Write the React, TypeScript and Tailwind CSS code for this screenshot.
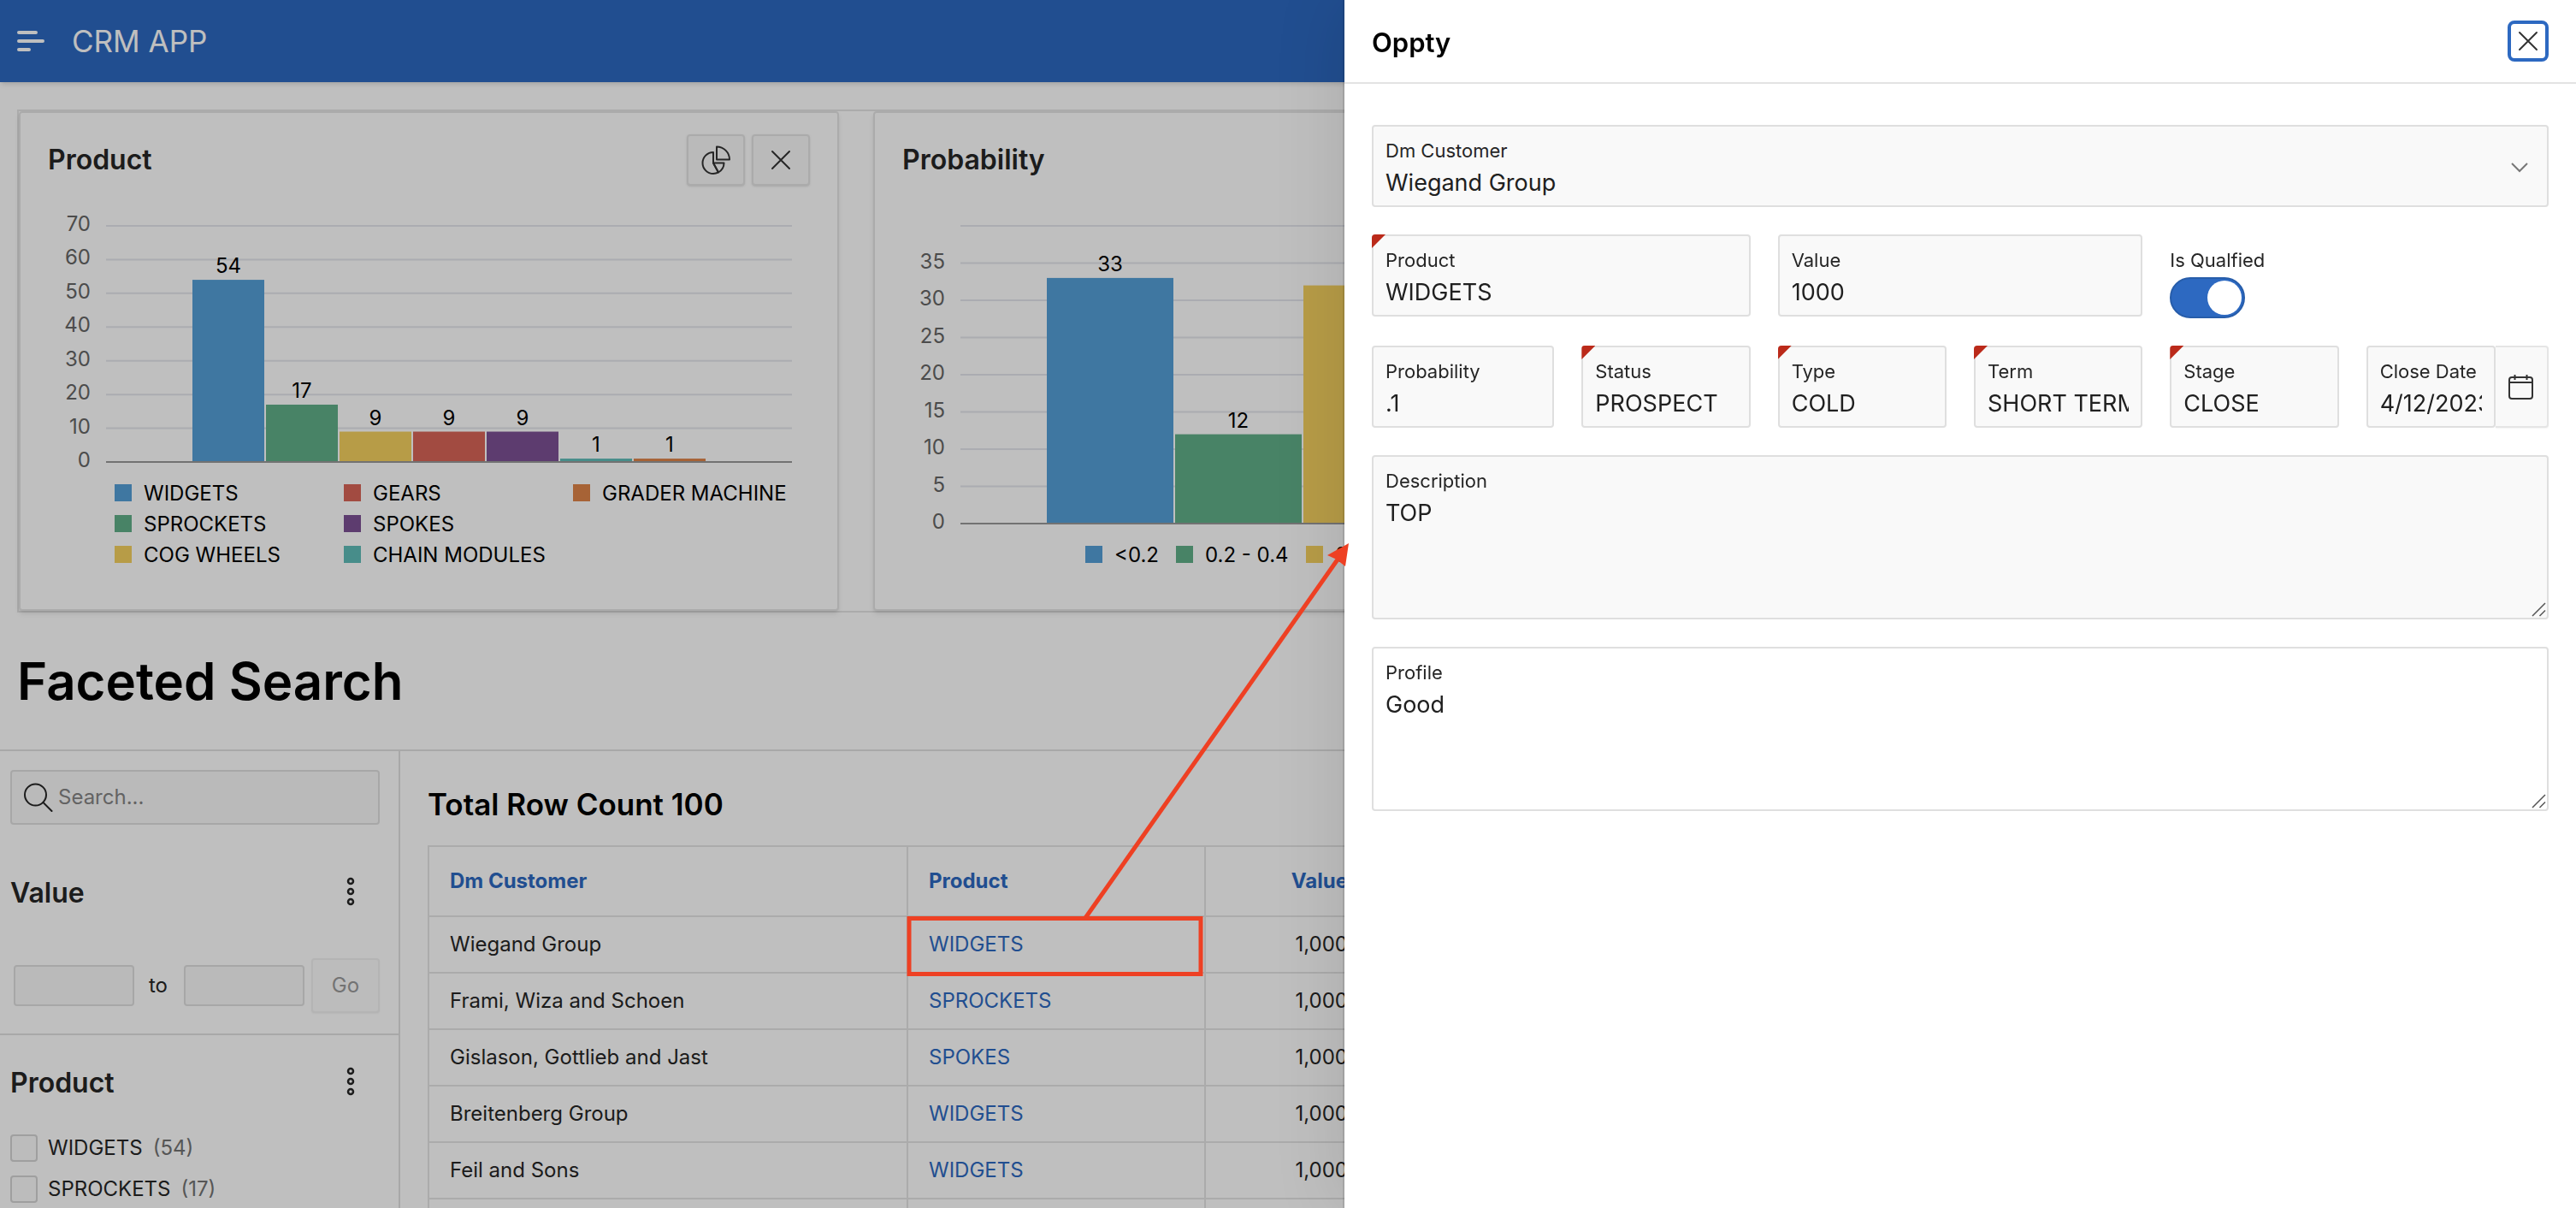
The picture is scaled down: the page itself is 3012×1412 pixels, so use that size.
import type { ReactNode } from "react";

const BLUE = "#549fd7";
const GREEN = "#60af88";
const YELLOW = "#f4d15f";
const RED = "#d86457";
const PURPLE = "#7d5195";
const TEAL = "#5fbcb9";
const ORANGE = "#df8449";

function CloseIcon() {
  return (
    <svg width="32" height="32" viewBox="0 0 32 32" fill="none" stroke="#333" strokeWidth="2" aria-hidden="true">
      <path d="M6 6 26 26M26 6 6 26" strokeLinecap="round" />
    </svg>
  );
}

function PieIcon() {
  return (
    <svg width="36" height="36" viewBox="0 0 36 36" fill="none" stroke="#333" strokeWidth="2" strokeLinejoin="round" aria-hidden="true">
      <path d="M15 9A12.500 12.500 0 0 0 2.500 21.500 12.500 12.500 0 0 0 15 34a12.500 12.500 0 0 0 6-1.600L15 21.500z" />
      <path d="M15 21.500H27.500a12.500 12.500 0 0 1-6.500 10.900z" />
      <path d="M19 2.500V17.500H34A15 15 0 0 0 19 2.500z" />
    </svg>
  );
}

function IconButton({ label, children }: { label: string; children: ReactNode }) {
  return (
    <button
      type="button"
      aria-label={label}
      className="flex h-[60px] w-[68px] items-center justify-center rounded border-2 border-[#e5e5e5] bg-[#f8f8f8] shadow-sm"
    >
      {children}
    </button>
  );
}

function Card({ title, actions, children }: { title: string; actions?: ReactNode; children: ReactNode }) {
  return (
    <section className="h-[584px] w-[959px] shrink-0 rounded border-2 border-[#e5e5e5] bg-white shadow-md">
      <div className="flex h-[110px] items-center justify-between px-8">
        <h2 className="text-[32px] leading-10 font-semibold text-[#262626]">{title}</h2>
        <div className="flex gap-2">{actions}</div>
      </div>
      {children}
    </section>
  );
}

type Bar = { label: string; value: number; color: string };
type LegendItem = { label: string; color: string; x: number; y: number };

type ChartProps = {
  name: string;
  bars: Bar[];
  ticks: number[];
  unit: number;
  base: number;
  start: number;
  pitch: number;
  hideTop?: boolean;
  legend: LegendItem[];
};

function BarChart({ name, bars, ticks, unit, base, start, pitch, hideTop, legend }: ChartProps) {
  return (
    <svg width="950" height="440" viewBox="0 0 950 440" role="img" aria-label={name} fontSize="24">
      {ticks.map((t, i) => (
        <g key={t}>
          <line
            x1="100"
            x2="902"
            y1={base - t * unit}
            y2={base - t * unit}
            stroke="#e4e6ec"
            strokeWidth="2"
          />
          {hideTop && i === ticks.length - 1 ? null : (
            <text x="82" y={base - t * unit + 6} textAnchor="end" fill="#666">
              {t}
            </text>
          )}
        </g>
      ))}
      {bars.map((b, i) => (
        <g key={b.label}>
          <rect x={start + i * pitch} y={base - b.value * unit} width={pitch - 2} height={b.value * unit} fill={b.color} />
          <text x={start + i * pitch + pitch / 2 - 1} y={base - b.value * unit - 8} textAnchor="middle" fill="#000">
            {b.value}
          </text>
        </g>
      ))}
      <line x1="100" x2="902" y1={base} y2={base} stroke="#999" strokeWidth="2" />
      {legend.map((l) => (
        <g key={l.label}>
          <rect x={l.x} y={l.y} width="20" height="20" fill={l.color} />
          <text x={l.x + 34} y={l.y + 19} fill="#000">
            {l.label}
          </text>
        </g>
      ))}
    </svg>
  );
}

const productBars: Bar[] = [
  { label: "WIDGETS", value: 54, color: BLUE },
  { label: "SPROCKETS", value: 17, color: GREEN },
  { label: "COG WHEELS", value: 9, color: YELLOW },
  { label: "GEARS", value: 9, color: RED },
  { label: "SPOKES", value: 9, color: PURPLE },
  { label: "CHAIN MODULES", value: 1, color: TEAL },
  { label: "GRADER MACHINE", value: 1, color: ORANGE },
];

const productLegend: LegendItem[] = productBars.map((b, i) => ({
  label: b.label,
  color: b.color,
  x: 110 + Math.floor(i / 3) * 268,
  y: 324 + (i % 3) * 36,
}));

const probabilityBars: Bar[] = [
  { label: "<0.2", value: 33, color: BLUE },
  { label: "0.2 - 0.4", value: 12, color: GREEN },
  { label: "0.4 - 0.6", value: 32, color: YELLOW },
];

const probabilityLegend: LegendItem[] = [
  { label: "<0.2", color: BLUE, x: 246, y: 396 },
  { label: "0.2 - 0.4", color: GREEN, x: 352, y: 396 },
  { label: "0.4 - 0.6", color: YELLOW, x: 504, y: 396 },
];

function Dots() {
  return (
    <button type="button" aria-label="Facet actions" className="flex h-10 w-8 items-center justify-center">
      <svg width="12" height="36" viewBox="0 0 12 36" fill="none" stroke="#262626" strokeWidth="2.500" aria-hidden="true">
        <circle cx="6" cy="6" r="3" />
        <circle cx="6" cy="18" r="3" />
        <circle cx="6" cy="30" r="3" />
      </svg>
    </button>
  );
}

function FacetHeader({ title }: { title: string }) {
  return (
    <div className="flex items-center justify-between pr-[18px]">
      <h3 className="pt-1 text-[32px] leading-10 font-semibold text-[#262626]">{title}</h3>
      <Dots />
    </div>
  );
}

function Facets() {
  return (
    <aside className="w-[468px] shrink-0 border-r-2 border-[#e0e0e0] text-[24px] leading-8">
      <div className="pt-[22px] pr-[22px] pl-3">
        <div className="flex h-16 items-center gap-1.5 rounded border-2 border-[#dfdfdf] bg-[#f9f9f9] px-3.5">
          <svg width="34" height="34" viewBox="0 0 34 34" fill="none" stroke="#262626" strokeWidth="2" aria-hidden="true">
            <circle cx="13.500" cy="14" r="12.500" />
            <path d="M22.500 23 32.500 33" strokeLinecap="round" />
          </svg>
          <input
            type="search"
            aria-label="Search"
            placeholder="Search..."
            className="min-w-0 flex-1 bg-transparent outline-none placeholder:text-[#858585]"
          />
        </div>
        <div className="py-14">
          <FacetHeader title="Value" />
        </div>
        <div className="flex items-center pb-6 pl-1">
          <input aria-label="Minimum value" className="h-12 w-[141px] rounded border-2 border-[#dfdfdf] bg-[#f9f9f9]" />
          <span className="w-14 text-center text-[#262626]">to</span>
          <input aria-label="Maximum value" className="mx-0.5 h-12 w-[141px] rounded border-2 border-[#dfdfdf] bg-[#f9f9f9]" />
          <button
            type="button"
            className="ml-1.5 h-16 w-20 rounded border-2 border-[#f0f0f0] bg-[#fbfbfb] text-[#9a9a9a] shadow-xs"
          >
            Go
          </button>
        </div>
      </div>
      <div className="border-t-2 border-[#e0e0e0] pt-8 pr-[22px] pl-3">
        <FacetHeader title="Product" />
        <div className="flex flex-col gap-4 pt-10 text-[#262626]">
          {[
            ["WIDGETS", 54],
            ["SPROCKETS", 17],
          ].map(([name, count]) => (
            <label key={name} className="flex items-center gap-3">
              <input type="checkbox" className="size-8 appearance-none rounded border-2 border-[#d4d4d4] bg-[#fbfbfb]" />
              <span>{name}</span>
              <span className="text-[#737373]">({count})</span>
            </label>
          ))}
        </div>
      </div>
    </aside>
  );
}

const rows = [
  ["Wiegand Group", "WIDGETS", "1,000"],
  ["Frami, Wiza and Schoen", "SPROCKETS", "1,000"],
  ["Gislason, Gottlieb and Jast", "SPOKES", "1,000"],
  ["Breitenberg Group", "WIDGETS", "1,000"],
  ["Feil and Sons", "WIDGETS", "1,000"],
  ["", "", ""],
];

function Results() {
  return (
    <div className="flex-1 pl-8">
      <h2 className="pt-[38px] text-[35px] leading-12 font-semibold text-black">Total Row Count 100</h2>
      <table className="mt-6 w-[1200px] table-fixed border-collapse text-[24px] leading-8 text-[#262626] [&_td]:h-[66px] [&_td]:border-2 [&_td]:border-[#e5e5e5] [&_td]:px-6 [&_th]:h-[82px] [&_th]:border-2 [&_th]:border-[#e5e5e5] [&_th]:px-6">
        <colgroup>
          <col className="w-[560px]" />
          <col className="w-[348px]" />
          <col className="w-[192px]" />
          <col />
        </colgroup>
        <thead>
          <tr className="text-left text-[#2d69c1] [&_th]:font-bold">
            <th>Dm Customer</th>
            <th>Product</th>
            <th className="text-right">Value</th>
            <th />
          </tr>
        </thead>
        <tbody>
          {rows.map(([customer, product, value]) => (
            <tr key={customer}>
              <td>{customer}</td>
              <td>
                <a href="#oppty" className="text-[#2d69c1]">
                  {product}
                </a>
              </td>
              <td className="text-right">{value}</td>
              <td />
            </tr>
          ))}
        </tbody>
      </table>
    </div>
  );
}

function Page() {
  return (
    <div className="h-screen overflow-hidden bg-white">
      <header className="flex h-24 items-center gap-8 bg-[#2d69c1] pl-5 shadow-md">
        <button type="button" aria-label="Navigation">
          <svg width="32" height="24" viewBox="0 0 32 24" stroke="#fff" strokeWidth="4" strokeLinecap="round" aria-hidden="true">
            <path d="M2 2H22M2 12H30M2 22H14" />
          </svg>
        </button>
        <span className="text-[35px] leading-12 text-white">CRM APP</span>
      </header>
      <div className="mt-8 ml-5 flex gap-10 border-y-2 border-l-2 border-[#e5e5e5]">
        <Card
          title="Product"
          actions={
            <>
              <IconButton label="Chart type">
                <PieIcon />
              </IconButton>
              <IconButton label="Remove chart">
                <CloseIcon />
              </IconButton>
            </>
          }
        >
          <BarChart
            name="Product"
            bars={productBars}
            ticks={[0, 10, 20, 30, 40, 50, 60, 70]}
            unit={276 / 70}
            base={298}
            start={201}
            pitch={86}
            legend={productLegend}
          />
        </Card>
        <Card title="Probability">
          <BarChart
            name="Probability"
            bars={probabilityBars}
            ticks={[0, 5, 10, 15, 20, 25, 30, 35, 40]}
            unit={348 / 40}
            base={370}
            start={201}
            pitch={150}
            hideTop
            legend={probabilityLegend}
          />
        </Card>
      </div>
      <h1 className="py-[46px] pl-5 text-[60px] leading-[68px] font-semibold text-black">Faceted Search</h1>
      <div className="flex border-t-2 border-[#e0e0e0]">
        <Facets />
        <Results />
      </div>
    </div>
  );
}

function Field({ id, label, value, required }: { id: string; label: string; value: string; required?: boolean }) {
  return (
    <div className="relative h-24 min-w-0 rounded border-2 border-[#dfdfdf] bg-[#f9f9f9] px-3.5 pt-3">
      {required && (
        <span className="absolute -top-0.5 -left-0.5 size-4 rounded-tl bg-[#bb2a1a] [clip-path:polygon(0_0,100%_0,0_100%)]" />
      )}
      <label htmlFor={id} className="block text-[22px] leading-8 whitespace-nowrap text-[#262626]">
        {label}
      </label>
      <input id={id} defaultValue={value} className="mt-0.5 block h-10 w-full bg-transparent text-[27px] leading-10 text-[#202020] outline-none" />
    </div>
  );
}

function Area({ id, label, value, tone }: { id: string; label: string; value: string; tone: string }) {
  return (
    <div className={`relative h-48 rounded border-2 border-[#dfdfdf] px-3.5 pt-3 ${tone}`}>
      <label htmlFor={id} className="block text-[22px] leading-8 text-[#262626]">
        {label}
      </label>
      <textarea
        id={id}
        defaultValue={value}
        className="mt-0.5 block h-[136px] w-full resize-none bg-transparent text-[27px] leading-10 text-[#202020] outline-none"
      />
      <svg className="absolute right-0 bottom-0" width="18" height="18" viewBox="0 0 18 18" stroke="#555" strokeWidth="1.500" aria-hidden="true">
        <path d="M1 16 16 1M9.500 16 16 9.500" />
      </svg>
    </div>
  );
}

function Dialog() {
  return (
    <div
      role="dialog"
      aria-label="Oppty"
      className="fixed inset-y-0 right-0 w-[1440px] bg-white shadow-[0_0_0_2px_rgba(0,0,0,0.1),0_0_80px_rgba(0,0,0,0.12)]"
    >
      <div className="flex h-[98px] items-center justify-between border-b-2 border-[#e3e3e3] px-8">
        <h2 className="pt-1 text-[31px] leading-10 font-semibold text-black">Oppty</h2>
        <button
          type="button"
          aria-label="Close"
          className="flex size-12 items-center justify-center rounded-lg border-4 border-[#2d69c1] bg-white"
        >
          <CloseIcon />
        </button>
      </div>
      <form className="flex flex-col gap-8 px-8 pt-12">
        <div className="relative h-24 rounded border-2 border-[#dfdfdf] bg-[#f9f9f9] px-3.5 pt-3">
          <label htmlFor="customer" className="block text-[22px] leading-8 text-[#262626]">
            Dm Customer
          </label>
          <select id="customer" className="mt-0.5 block h-10 w-full appearance-none bg-transparent text-[27px] leading-10 text-[#202020] outline-none">
            <option>Wiegand Group</option>
          </select>
          <svg className="absolute top-[42px] right-[22px]" width="20" height="12" viewBox="0 0 20 12" fill="none" stroke="#777" strokeWidth="2" aria-hidden="true">
            <path d="M1 1 10 10 19 1" />
          </svg>
        </div>
        <div className="grid grid-cols-[213fr_197fr_197fr_197fr_197fr_213fr] gap-8">
          <div className="col-span-2">
            <Field id="product" label="Product" value="WIDGETS" required />
          </div>
          <div className="col-span-2">
            <Field id="value" label="Value" value="1000" />
          </div>
          <div className="col-span-2 pt-3.5">
            <label htmlFor="qualified" className="block text-[22px] leading-8 text-[#262626]">
              Is Qualfied
            </label>
            <span className="relative mt-1 block h-12 w-[88px]">
              <input
                id="qualified"
                type="checkbox"
                role="switch"
                defaultChecked
                className="h-12 w-[88px] appearance-none rounded-full border-2 border-[#275daa] bg-[#2d69c1]"
              />
              <span className="pointer-events-none absolute top-1 right-1 size-10 rounded-full bg-white" />
            </span>
          </div>
          <Field id="probability" label="Probability" value=".1" />
          <Field id="status" label="Status" value="PROSPECT" required />
          <Field id="type" label="Type" value="COLD" required />
          <Field id="term" label="Term" value="SHORT TERM" required />
          <Field id="stage" label="Stage" value="CLOSE" required />
          <div className="flex">
            <div className="min-w-0 flex-1">
              <Field id="close-date" label="Close Date" value="4/12/2023" />
            </div>
            <button
              type="button"
              aria-label="Pick a date"
              className="flex h-24 w-[62px] items-center justify-center rounded-r border-y-2 border-r-2 border-[#e5e5e5] bg-[#f9f9f9] shadow-xs"
            >
              <svg width="32" height="32" viewBox="0 0 32 32" fill="none" stroke="#333" strokeWidth="2" aria-hidden="true">
                <rect x="2" y="5" width="27" height="25" rx="3" />
                <path d="M2 11H29M8.500 2V8M22.500 2V8" />
              </svg>
            </button>
          </div>
        </div>
        <Area id="description" label="Description" value="TOP" tone="bg-[#f9f9f9]" />
        <Area id="profile" label="Profile" value="Good" tone="bg-white" />
      </form>
    </div>
  );
}

function Annotation() {
  return (
    <svg className="pointer-events-none absolute top-[630px] left-[1058px]" width="524" height="514" viewBox="0 0 524 514" aria-hidden="true">
      <rect x="5" y="443.500" width="341" height="65" fill="none" stroke="#ee4023" strokeWidth="5" />
      <path d="M211 443 506 24" stroke="#ee4023" strokeWidth="5" />
      <path d="M519 5 494 19 505 24 515 32z" fill="#ee4023" />
    </svg>
  );
}

export default function App() {
  return (
    <div className="relative h-screen overflow-hidden font-[Inter,'Liberation_Sans',sans-serif]">
      <Page />
      <div className="absolute inset-0 bg-black/25" />
      <Dialog />
      <Annotation />
    </div>
  );
}
